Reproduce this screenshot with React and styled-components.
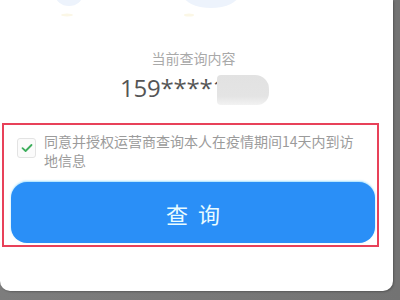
import React from "react";
import styled, { createGlobalStyle } from "styled-components";

const Global = createGlobalStyle`
  html, body { margin: 0; padding: 0; }
  body {
    width: 400px;
    height: 300px;
    overflow: hidden;
    background: #747474;
    font-family: "Noto Sans CJK SC", "Noto Sans", sans-serif;
  }
`;

const Page = styled.div`
  width: 400px;
  height: 300px;
  background: linear-gradient(90deg, #7d7d7d 0%, #737373 100%);
  display: flex;
  align-items: flex-start;
`;

const Card = styled.div`
  width: 393px;
  height: 291px;
  background: #ffffff;
  border-radius: 0 0 10px 10px;
  box-shadow: 1px 1px 2px rgba(0, 0, 0, 0.25);
  display: flex;
  flex-direction: column;
  align-items: stretch;
  box-sizing: border-box;
`;

const TopDecor = styled.svg`
  display: block;
  width: 393px;
  height: 20px;
`;

const Label = styled.div`
  margin-top: 28px;
  text-align: center;
  font-size: 14px;
  line-height: 20px;
  color: #a9a9a9;
  padding-right: 6px;
`;

const NumberRow = styled.div`
  margin-top: 4px;
  height: 32px;
  display: flex;
  justify-content: center;
  align-items: center;
  padding-right: 4px;
`;

const Number = styled.span`
  font-family: "Open Sans", "Noto Sans", sans-serif;
  font-size: 24px;
  line-height: 32px;
  color: #555555;
  letter-spacing: -0.2px;
`;

const Blur = styled.span`
  display: inline-block;
  width: 52px;
  height: 30px;
  margin-left: -9px;
  margin-top: 4px;
  border-radius: 4px 14px 12px 4px;
  background: linear-gradient(180deg, #e2e2e2 0%, #e4e4e4 70%, #f2f2f2 100%);
  filter: blur(0.6px);
`;

const AgreeBox = styled.div`
  margin-top: 19px;
  margin-left: 2px;
  width: 377px;
  height: 124px;
  box-sizing: border-box;
  border: 2px solid #e84159;
  padding: 7px 2px 2px 7px;
  display: flex;
  flex-direction: column;
`;

const CheckRow = styled.div`
  display: flex;
  align-items: flex-start;
  gap: 8px;
  padding-left: 6px;
`;

const CheckBox = styled.span`
  flex: none;
  width: 19px;
  height: 20px;
  margin-top: 6px;
  box-sizing: border-box;
  border: 1px solid #e3e3e3;
  border-radius: 3px;
  background: #fbfbfb;
  display: flex;
  align-items: center;
  justify-content: center;
`;

const AgreeText = styled.p`
  margin: 0;
  font-size: 14px;
  line-height: 19px;
  color: #9b9b9b;
  width: 320px;
`;

const QueryButton = styled.button`
  margin-top: 12px;
  width: 364px;
  height: 61px;
  border: none;
  border-radius: 16px;
  background: #2a8ff7;
  box-shadow: 0 -1px 2px rgba(120, 210, 255, 0.7);
  color: #eafcff;
  font-family: "Noto Sans CJK SC", sans-serif;
  font-size: 22px;
  letter-spacing: 10px;
  padding: 0 0 0 10px;
  display: flex;
  align-items: center;
  justify-content: center;
`;

export default function App() {
  return (
    <>
      <Global />
      <Page>
        <Card>
          <TopDecor viewBox="0 0 393 20">
            <ellipse cx="69" cy="-6" rx="14" ry="12" fill="#edf3fc" />
            <ellipse cx="211" cy="-6" rx="28" ry="14" fill="#edf3fc" />
            <ellipse cx="67" cy="15" rx="6" ry="1.5" fill="#fbf7e6" />
            <ellipse cx="189" cy="15" rx="5" ry="1.5" fill="#fbf7e6" />
          </TopDecor>
          <Label>当前查询内容</Label>
          <NumberRow>
            <Number>159****1</Number>
            <Blur />
          </NumberRow>
          <AgreeBox>
            <CheckRow>
              <CheckBox>
                <svg width="12" height="10" viewBox="0 0 12 10">
                  <path
                    d="M1.5 5.2 L4.6 8 L10.5 2"
                    fill="none"
                    stroke="#3dae5c"
                    strokeWidth="1.8"
                    strokeLinecap="round"
                    strokeLinejoin="round"
                  />
                </svg>
              </CheckBox>
              <AgreeText>同意并授权运营商查询本人在疫情期间14天内到访地信息</AgreeText>
            </CheckRow>
            <QueryButton>查询</QueryButton>
          </AgreeBox>
        </Card>
      </Page>
    </>
  );
}
